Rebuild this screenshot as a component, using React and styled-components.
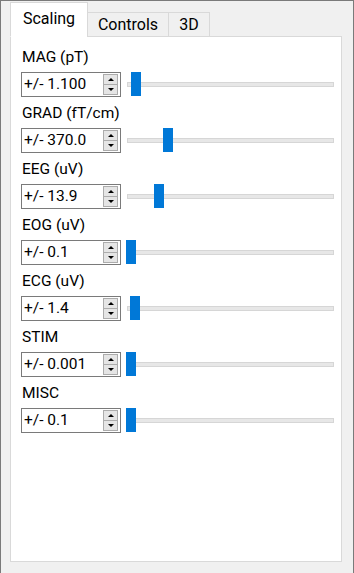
import React from 'react'
import styled, { createGlobalStyle } from 'styled-components'

const GlobalStyle = createGlobalStyle`
    html, body {
        margin: 0;
        padding: 0;
        background: #f0f0f0;
    }
    body {
        font-family: Roboto, "Noto Sans", sans-serif;
        color: #000;
    }
`;

const Frame = styled.div`
    width: 354px;
    height: 573px;
    box-sizing: border-box;
    border: 1px solid #7a7a7a;
    border-bottom: none;
    background: #f0f0f0;
    padding: 2px 11px 11px 9px;
    display: flex;
    flex-direction: column;
`;

const TabBar = styled.div`
    display: flex;
    align-items: flex-end;
    height: 34px;
    position: relative;
    z-index: 1;
    margin-bottom: -1px;
`;

const Tab = styled.div`
    box-sizing: border-box;
    height: ${p => (p.$active ? '35px' : '25px')};
    padding: 0 8px;
    width: ${p => p.$width}px;
    background: ${p => (p.$active ? '#fff' : '#f0f0f0')};
    border: 1px solid #d9d9d9;
    border-bottom: ${p => (p.$active ? '1px solid #fff' : '1px solid #d9d9d9')};
    margin-left: ${p => (p.$first ? '0' : '-1px')};
    font-size: 16px;
    display: flex;
    align-items: center;
    justify-content: center;
    padding-bottom: ${p => (p.$active ? '3px' : '1px')};
`;

const Pane = styled.div`
    flex: 1;
    background: #fff;
    border: 1px solid #d9d9d9;
    padding: 10px 7px 0 10px;
    display: flex;
    flex-direction: column;
    gap: 6px;
`;

const Row = styled.div`
    display: flex;
    flex-direction: column;
    gap: 5px;
`;

const Label = styled.div`
    height: 20px;
    line-height: 20px;
    font-size: 15.5px;
    padding-left: 1px;
`;

const Controls = styled.div`
    display: flex;
    align-items: center;
    gap: 5px;
`;

const SpinBox = styled.div`
    box-sizing: border-box;
    flex-shrink: 0;
    width: 100px;
    height: 25px;
    border: 1px solid #7a7a7a;
    background: #fff;
    display: flex;
    align-items: center;
    padding: 0 1px 0 2px;
`;

const SpinText = styled.div`
    flex: 1;
    font-size: 15.5px;
    line-height: 23px;
`;

const SpinButtons = styled.div`
    width: 15px;
    height: 21px;
    display: flex;
    flex-direction: column;
    margin-right: 1px;
`;

const SpinButton = styled.div`
    flex: 1;
    box-sizing: border-box;
    background: #e5e5e5;
    border: 1px solid #acacac;
    margin-top: ${p => (p.$down ? '-1px' : '0')};
    display: flex;
    align-items: center;
    justify-content: center;
`;

const Arrow = styled.div`
    width: 0;
    height: 0;
    border-left: 3px solid transparent;
    border-right: 3px solid transparent;
    ${p => (p.$down ? 'border-top: 3px solid #000;' : 'border-bottom: 3px solid #000;')}
`;

const Slider = styled.div`
    position: relative;
    flex-shrink: 0;
    width: 208px;
    height: 25px;
    display: flex;
    align-items: center;
`;

const Track = styled.div`
    box-sizing: border-box;
    margin-left: 1px;
    width: 207px;
    height: 5px;
    background: #e7e7e7;
    border: 1px solid #d6d6d6;
`;

const Handle = styled.div`
    position: absolute;
    top: 0;
    width: 10px;
    height: 24px;
    background: #0078d7;
`;

const channels = [
    { name: 'MAG (pT)', value: '+/- 1.100', pos: 5 },
    { name: 'GRAD (fT/cm)', value: '+/- 370.0', pos: 37 },
    { name: 'EEG (uV)', value: '+/- 13.9', pos: 28 },
    { name: 'EOG (uV)', value: '+/- 0.1', pos: 0 },
    { name: 'ECG (uV)', value: '+/- 1.4', pos: 4 },
    { name: 'STIM', value: '+/- 0.001', pos: 0 },
    { name: 'MISC', value: '+/- 0.1', pos: 0 },
];

export default function App() {
    return (
        <>
            <GlobalStyle />
            <Frame>
                <TabBar>
                    <Tab $active $first $width={78}>Scaling</Tab>
                    <Tab $width={82}>Controls</Tab>
                    <Tab $width={42}>3D</Tab>
                </TabBar>
                <Pane>
                    {channels.map(ch => (
                        <Row key={ch.name}>
                            <Label>{ch.name}</Label>
                            <Controls>
                                <SpinBox>
                                    <SpinText>{ch.value}</SpinText>
                                    <SpinButtons>
                                        <SpinButton><Arrow /></SpinButton>
                                        <SpinButton $down><Arrow $down /></SpinButton>
                                    </SpinButtons>
                                </SpinBox>
                                <Slider>
                                    <Track />
                                    <Handle style={{ left: ch.pos }} />
                                </Slider>
                            </Controls>
                        </Row>
                    ))}
                </Pane>
            </Frame>
        </>
    )
}
